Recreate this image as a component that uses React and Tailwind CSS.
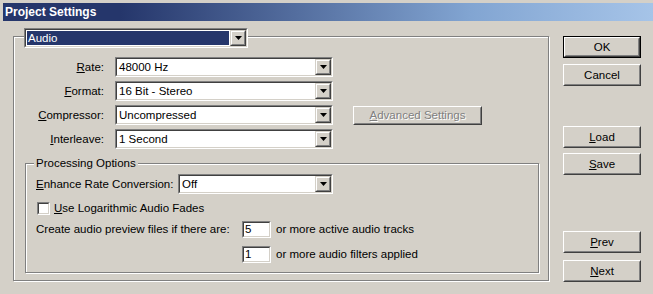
import React from 'react';

const FACE = 'bg-[#d4d0c8]';

const Arrow = () => (
  <svg width="7" height="4" viewBox="0 0 7 4" className="block">
    <polygon points="0,0 7,0 3.5,4" fill="#000" />
  </svg>
);

const DropButton = () => (
  <div className="w-[16px] h-full border border-t-[#d4d0c8] border-l-[#d4d0c8] border-b-[#404040] border-r-[#404040]">
    <div className="w-full h-full border border-t-white border-l-white border-b-[#808080] border-r-[#808080] bg-[#d4d0c8] flex items-center justify-center">
      <Arrow />
    </div>
  </div>
);

const Sunken = ({ className = '', children }) => (
  <div className={`border border-t-[#808080] border-l-[#808080] border-b-white border-r-white ${className}`}>
    <div className="w-full h-full border border-t-[#404040] border-l-[#404040] border-b-[#d4d0c8] border-r-[#d4d0c8] bg-white flex">
      {children}
    </div>
  </div>
);

const Combo = ({ value, className = '' }) => (
  <Sunken className={`h-[20px] ${className}`}>
    <div className="flex-1 pl-[2px] flex items-center text-black whitespace-nowrap overflow-hidden">{value}</div>
    <DropButton />
  </Sunken>
);

const Button = ({ children, isDefault, disabled, className = '' }) => {
  const inner = (
    <div className="w-full h-full border border-t-white border-l-white border-b-[#404040] border-r-[#404040]">
      <div className="w-full h-full border border-t-[#d4d0c8] border-l-[#d4d0c8] border-b-[#808080] border-r-[#808080] flex items-center justify-center">
        <span className={disabled ? 'text-[#808080] [text-shadow:1px_1px_0_#fff]' : 'text-black'}>{children}</span>
      </div>
    </div>
  );
  if (isDefault) {
    return <div className={`border border-black ${className}`}>{inner}</div>;
  }
  return <div className={className}>{inner}</div>;
};

const Row = ({ label, value }) => (
  <div className="flex items-center h-[20px]">
    <div className="w-[90px] text-right">{label}</div>
    <Combo value={value} className="ml-[11px] w-[218px]" />
  </div>
);

export default function App() {
  return (
    <div
      className={`w-[653px] h-[294px] ${FACE} pt-[3px] pl-[3px] overflow-hidden text-[11.5px] leading-[13px] text-black`}
      style={{ fontFamily: '"Liberation Sans", Arial, sans-serif' }}
    >
      <div className="h-[18px] w-[650px] bg-[linear-gradient(90deg,#25366b_18%,#82a5d2_72%,#a6c4e8_100%)] flex items-center pl-[2px]">
        <span className="text-white font-bold text-[12px]">Project Settings</span>
      </div>

      <div className="flex">
        {/* main group */}
        <div className="ml-[10px] mt-[15px] w-[536px] h-[245px] relative border border-[#808080] shadow-[inset_1px_1px_0_#fff,1px_1px_0_#fff]">
          <div className="absolute left-[10px] top-[-9px] w-[224px] h-[20px] border border-t-[#808080] border-l-[#808080] border-b-white border-r-white">
            <div className="w-full h-full border border-t-[#404040] border-l-[#404040] border-b-[#d4d0c8] border-r-[#d4d0c8] bg-white flex">
              <div className="flex-1 m-[1px] bg-[#25366b] text-white flex items-center pl-[1px]">Audio</div>
              <DropButton />
            </div>
          </div>

          <div className="pt-[20px] flex flex-col gap-[4px]">
            <Row label={<><u>R</u>ate:</>} value="48000 Hz" />
            <Row label={<><u>F</u>ormat:</>} value="16 Bit - Stereo" />
            <div className="flex items-center h-[20px]">
              <div className="w-[90px] text-right"><u>C</u>ompressor:</div>
              <Combo value="Uncompressed" className="ml-[11px] w-[218px]" />
              <Button disabled className="ml-[20px] w-[129px] h-[19px]"><u>A</u>dvanced Settings</Button>
            </div>
            <Row label={<><u>I</u>nterleave:</>} value="1 Second" />
          </div>

          {/* processing options */}
          <div className="ml-[11px] mt-[14px] w-[514px] h-[110px] relative border border-[#808080] shadow-[inset_1px_1px_0_#fff,1px_1px_0_#fff]">
            <span className={`absolute left-[8px] top-[-7px] px-[2px] ${FACE}`}>Processing Options</span>
            <div className="pl-[10px] pt-[10px]">
              <div className="flex items-center h-[20px]">
                <div className="w-[142px]"><u>E</u>nhance Rate Conversion:</div>
                <Combo value="Off" className="w-[155px]" />
              </div>
              <div className="flex items-center mt-[8px] h-[13px]">
                <Sunken className="ml-[1px] w-[13px] h-[13px]" />
                <span className="ml-[4px]"><u>U</u>se Logarithmic Audio Fades</span>
              </div>
              <div className="flex items-center mt-[6px] h-[17px]">
                <div className="w-[206px]">Create audio preview files if there are:</div>
                <Sunken className="w-[29px] h-[17px]">
                  <span className="pl-[1px] flex items-center">5</span>
                </Sunken>
                <span className="ml-[5px]">or more active audio tracks</span>
              </div>
              <div className="flex items-center mt-[8px] h-[17px]">
                <div className="w-[206px]" />
                <Sunken className="w-[29px] h-[17px]">
                  <span className="pl-[1px] flex items-center">1</span>
                </Sunken>
                <span className="ml-[5px]">or more audio filters applied</span>
              </div>
            </div>
          </div>
        </div>

        {/* buttons */}
        <div className="ml-[14px] mt-[15px] w-[78px] flex flex-col">
          <Button isDefault className="h-[22px]">OK</Button>
          <Button className="h-[22px] mt-[6px]">Cancel</Button>
          <Button className="h-[22px] mt-[40px]"><u>L</u>oad</Button>
          <Button className="h-[22px] mt-[5px]"><u>S</u>ave</Button>
          <Button className="h-[22px] mt-[56px]"><u>P</u>rev</Button>
          <Button className="h-[22px] mt-[7px]"><u>N</u>ext</Button>
        </div>
      </div>
    </div>
  );
}
